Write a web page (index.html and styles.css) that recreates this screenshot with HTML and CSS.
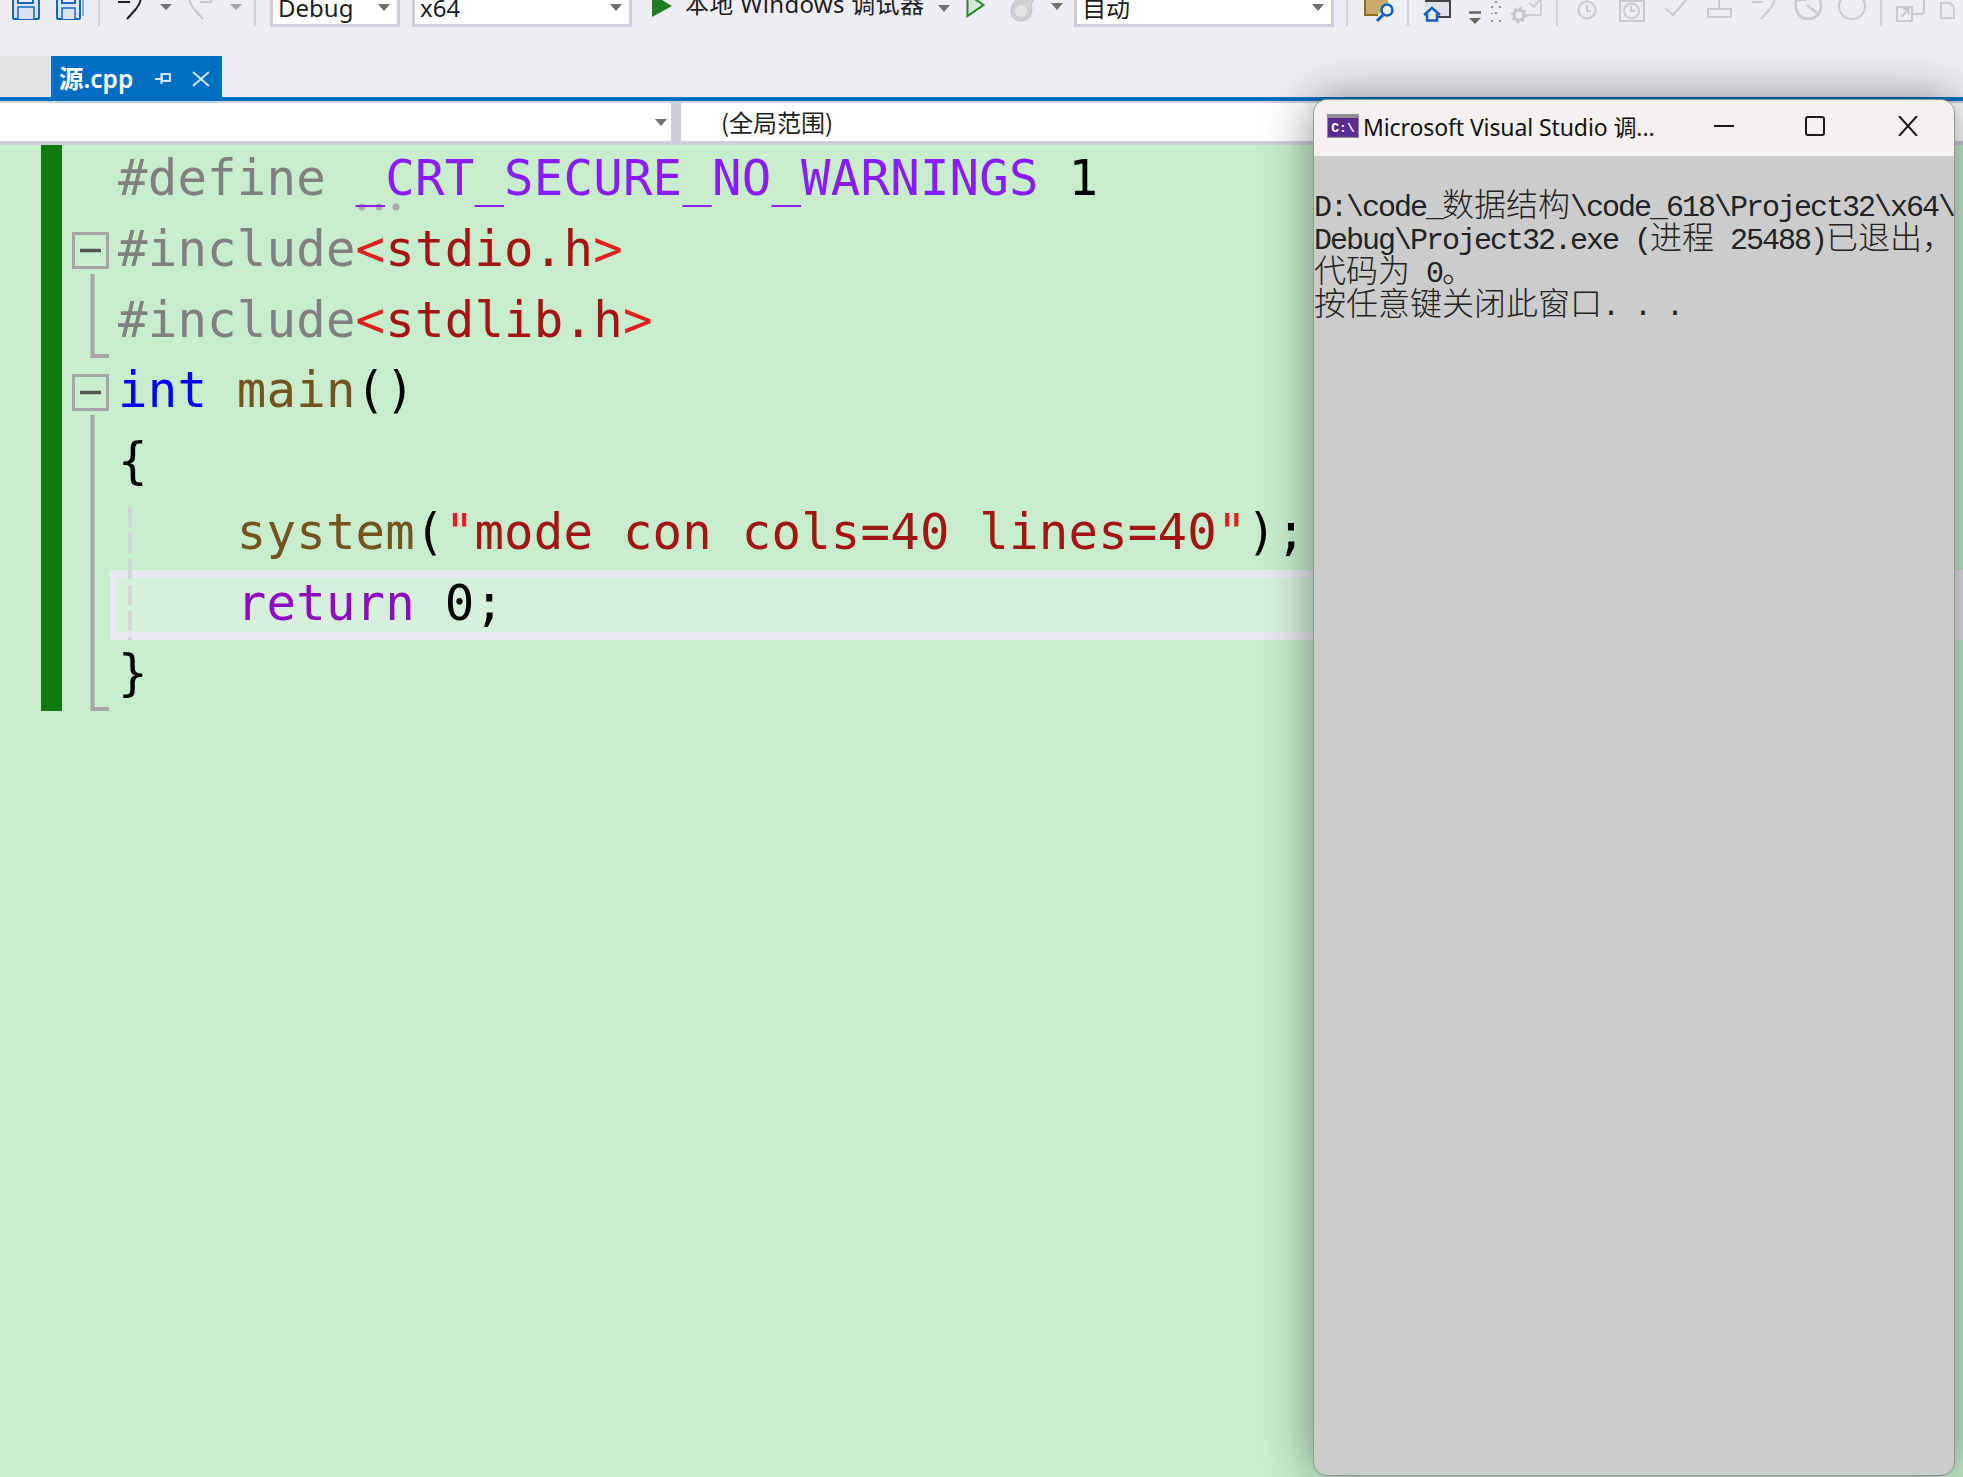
FILE: index.html
```html
<!DOCTYPE html>
<html lang="zh">
<head>
<meta charset="utf-8">
<title>源.cpp</title>
<link rel="stylesheet" href="styles.css">
</head>
<body>
<div class="ide">
  <div class="toolbar">
    <svg class="strip" width="270" height="35" viewBox="0 -8 270 35" fill="none">
      <rect x="13" y="-6" width="26" height="25" rx="1" fill="#dbe3f0" stroke="#1468c0" stroke-width="2"/>
      <path d="M18 -6v9h15v-9" fill="#eeeef2" stroke="#1468c0" stroke-width="2"/>
      <path d="M18 19V7h16v12" fill="#dbe3f0" stroke="#1468c0" stroke-width="1.500"/>
      <path d="M83 -8v24" stroke="#7fa9d8" stroke-width="2"/>
      <rect x="57" y="-6" width="23" height="25" rx="1" fill="#dbe3f0" stroke="#1468c0" stroke-width="2"/>
      <path d="M62 -6v9h13v-9" fill="#eeeef2" stroke="#1468c0" stroke-width="2"/>
      <path d="M62 19V8h13v11" fill="#dbe3f0" stroke="#1468c0" stroke-width="1.500"/>
      <rect x="98" y="-8" width="2" height="34" fill="#cfd0dc"/>
      <path d="M118 2h12M141 -3c0 5-2 8-5 12L127 19" stroke="#222" stroke-width="2"/>
      <path d="M160 4h12l-6 6z" fill="#717171"/>
      <path d="M189 -3c0 5 2 8 5 12l9 10M200 2h11v-6" stroke="#c8c8cc" stroke-width="2"/>
      <path d="M230 4h12l-6 6z" fill="#a4a4a8"/>
      <rect x="254" y="-8" width="2" height="34" fill="#cfd0dc"/>
    </svg>
    <div class="combo combo-config"><span>Debug</span><i class="caret"></i></div>
    <div class="combo combo-platform"><span>x64</span><i class="caret"></i></div>
    <svg class="play" width="20" height="26" viewBox="0 0 20 26"><path d="M0 0l20 12L0 23z" fill="#1f7d1f"/></svg>
    <span class="run-label">本地 Windows 调试器</span>
    <i class="caret caret-run"></i>
    <svg class="play-outline" width="20" height="30" viewBox="0 -8 20 30"><path d="M1.500 -6v22l16-11z" fill="#d7e6d9" stroke="#1f8a1f" stroke-width="2"/></svg>
    <svg class="flame" width="28" height="30" viewBox="0 -8 28 30"><path d="M11 21C4 21 1 16 1 11 1 5 5 1 8 -3c0 3 1 4 3 4 2-2 5-3 6-6 1 2 1 4 0 5 3 0 5-1 8-3-1 3-3 5-4 7 2 6 1 17-10 17z" fill="#d0d0d2" stroke="#c2c2c6"/><circle cx="11" cy="11" r="6" fill="#e4e4e6"/></svg>
    <i class="caret caret-flame"></i>
    <div class="combo combo-auto"><span>自动</span><i class="caret"></i></div>
    <svg class="strip strip-end" width="628" height="35" viewBox="1335 -8 628 35" fill="none">
      <rect x="1347" y="-8" width="2" height="34" fill="#cfd0dc"/>
      <path d="M1366 -8v22h14l9-9V-8z" fill="#c9ab6c"/>
      <path d="M1366 -8v23h13" stroke="#8e6d14" stroke-width="2"/>
      <circle cx="1388" cy="10" r="5.500" fill="#eeeef2" stroke="#0f62b8" stroke-width="2.500"/>
      <path d="M1384 15l-6 6" stroke="#0f62b8" stroke-width="3"/>
      <rect x="1408" y="-8" width="2" height="34" fill="#cfd0dc"/>
      <rect x="1426" y="1" width="25" height="16" fill="#e0e0e6"/>
      <path d="M1426 1h25v16h-13" stroke="#444" stroke-width="2"/>
      <path d="M1425 15l8-7 8 7M1428 14v6.500h10V14" stroke="#0f62b8" stroke-width="2.500" fill="#eeeef2"/>
      <path d="M1470 12.500h12" stroke="#666" stroke-width="2.500"/>
      <path d="M1470 18h12l-6 6z" fill="#666"/>
      <path d="M1497 1v2M1493 6v2M1501 6v2M1497 12v2M1493 20v2M1501 20v2M1493 13v1" stroke="#999" stroke-width="2.500"/>
      <path d="M1516 -8v4M1516 15h26V-8" stroke="#cfcfd3" stroke-width="2"/>
      <path d="M1530 3l5 4 7-9" stroke="#cfcfd3" stroke-width="2"/>
      <circle cx="1520" cy="15" r="7" fill="#eeeef2"/>
      <circle cx="1520" cy="15" r="5" stroke="#c4c4c8" stroke-width="3"/>
      <circle cx="1520" cy="15" r="7" stroke="#c4c4c8" stroke-width="2" stroke-dasharray="2.500 3"/>
      <rect x="1557" y="-8" width="2" height="34" fill="#cfd0dc"/>
      <circle cx="1588" cy="10" r="8.500" stroke="#cacace" stroke-width="2"/>
      <path d="M1588 5v6h4M1588 -1v3" stroke="#cacace" stroke-width="2"/>
      <rect x="1621" y="1" width="24" height="20" stroke="#cacace" stroke-width="2"/>
      <circle cx="1632.500" cy="11" r="7.500" stroke="#cacace" stroke-width="2"/>
      <path d="M1632 6v5h4" stroke="#cacace" stroke-width="2"/>
      <path d="M1666 8l8 7 14-16" stroke="#cacace" stroke-width="2"/>
      <path d="M1709 9h23v8h-23zM1720 9V0" stroke="#cacace" stroke-width="2"/>
      <path d="M1753 2h11M1776 -3c0 5-2 8-5 12l-9 10" stroke="#cacace" stroke-width="2"/>
      <path d="M1797 0c-2 10 3 19 12 19 8 0 13-6 13-13s-4-11-8-13M1808 5l10 8M1796 0h12" stroke="#cacace" stroke-width="2.500"/>
      <circle cx="1853" cy="6" r="13" stroke="#cacace" stroke-width="2"/>
      <rect x="1881" y="-8" width="2" height="34" fill="#cfd0dc"/>
      <rect x="1898" y="7" width="15" height="14" stroke="#cacace" stroke-width="2"/>
      <path d="M1902 17l7-7M1904 9h5.500v5.500M1914 14h9l2-2V-8" stroke="#cacace" stroke-width="2"/>
      <path d="M1942 3h9l4 4v11h-13z" stroke="#cacace" stroke-width="2"/>
    </svg>
  </div>

  <div class="tabwell">
    <div class="tabwell-rest"></div>
    <div class="tab">
      <span class="tab-name">源.cpp</span>
      <svg class="tab-pin" width="17" height="14" viewBox="0 0 17 14" fill="none"><path d="M0 7h6M6.500 1v11" stroke="#d5e5f5" stroke-width="2"/><rect x="7" y="2" width="8" height="7" stroke="#d5e5f5" stroke-width="2"/></svg>
      <svg class="tab-close" width="18" height="16" viewBox="0 0 18 16" fill="none"><path d="M1 1l16 14M17 1L1 15" stroke="#d5e5f5" stroke-width="2"/></svg>
    </div>
  </div>
  <div class="tabline"></div>

  <div class="navbar">
    <div class="nav-left"><i class="caret"></i></div>
    <div class="nav-right">(全局范围)</div>
  </div>

  <div class="editor">
    <div class="changebar"></div>
    <svg class="outline" width="46" height="566" viewBox="0 0 46 566" fill="none">
      <rect x="1.500" y="88.500" width="34" height="34" fill="#c7edcc" stroke="#a5a5a5" stroke-width="3"/>
      <path d="M8 105.500h21" stroke="#555" stroke-width="3.500"/>
      <path d="M20.500 129v82H37" stroke="#a5a5a5" stroke-width="4"/>
      <rect x="1.500" y="230.500" width="34" height="34" fill="#c7edcc" stroke="#a5a5a5" stroke-width="3"/>
      <path d="M8 247.500h21" stroke="#555" stroke-width="3.500"/>
      <path d="M20.500 270v294H37" stroke="#a5a5a5" stroke-width="4"/>
    </svg>
    <div class="code">
      <div class="guide"></div>
      <svg class="squiggle" width="44" height="8" viewBox="0 0 44 8"><circle cx="4" cy="4" r="3.500" fill="#a8a8a8"/><circle cx="21" cy="4" r="3.500" fill="#a8a8a8"/><circle cx="38" cy="4" r="3.500" fill="#a8a8a8"/></svg>
      <div class="line"><span class="pp">#define </span><span class="macro">_CRT_SECURE_NO_WARNINGS</span> 1</div>
      <div class="line"><span class="pp">#include</span><span class="br">&lt;</span><span class="str">stdio.h</span><span class="br">&gt;</span></div>
      <div class="line"><span class="pp">#include</span><span class="br">&lt;</span><span class="str">stdlib.h</span><span class="br">&gt;</span></div>
      <div class="line"><span class="kw">int</span> <span class="fn">main</span>()</div>
      <div class="line">{</div>
      <div class="line">    <span class="fn">system</span>(<span class="br">"</span><span class="str">mode con cols=40 lines=40</span><span class="br">"</span>);</div>
      <div class="line current">    <span class="ctl">return</span> 0;</div>
      <div class="line">}</div>
    </div>
  </div>
</div>

<div class="console">
  <div class="console-title">
    <svg class="console-icon" width="32" height="24" viewBox="0 0 32 24"><rect width="32" height="24" fill="#8d8d98"/><rect x="1" y="4" width="30" height="19" fill="#5c2d91"/><text x="16" y="18" font-family="Liberation Mono" font-size="13" font-weight="700" fill="#fff" text-anchor="middle">C:\</text></svg>
    <span class="console-name">Microsoft Visual Studio 调...</span>
    <svg class="win-btn btn-min" width="20" height="20" viewBox="0 0 20 20"><path d="M0 10h20" stroke="#1a1a1a" stroke-width="2"/></svg>
    <svg class="win-btn btn-max" width="20" height="20" viewBox="0 0 20 20" fill="none"><rect x="1" y="1" width="18" height="18" rx="2" stroke="#1a1a1a" stroke-width="2"/></svg>
    <svg class="win-btn btn-close" width="20" height="20" viewBox="0 0 20 20"><path d="M1 0l18 20M19 0L1 20" stroke="#1a1a1a" stroke-width="2"/></svg>
  </div>
  <div class="console-body">
    <div class="console-line">D:\code_<span class="cjk">数据结构</span>\code_618\Project32\x64\</div>
    <div class="console-line">Debug\Project32.exe (<span class="cjk">进程</span> 25488)<span class="cjk">已退出，</span></div>
    <div class="console-line"><span class="cjk">代码为</span> 0<span class="cjk">。</span></div>
    <div class="console-line"><span class="cjk">按任意键关闭此窗口</span>. . .</div>
  </div>
</div>
</body>
</html>
```
FILE: styles.css
```css
* { box-sizing: border-box; }
html, body { margin: 0; padding: 0; }
body {
  width: 1963px;
  height: 1477px;
  overflow: hidden;
  position: relative;
  background: #c7edcc;
  font-family: "Noto Sans", "Noto Sans CJK SC", sans-serif;
  color: #1e1e1e;
}
.ide { display: flex; flex-direction: column; height: 1477px; }

.toolbar {
  height: 56px;
  background: #eeeef2;
  overflow: hidden;
  display: flex;
  align-items: flex-start;
  flex: none;
}
.strip { flex: none; margin-top: -8px; }
.combo {
  flex: none;
  height: 35px;
  margin-top: -8px;
  background: #fff;
  border: 3px solid #cccedb;
  display: flex;
  align-items: flex-start;
  justify-content: space-between;
  font-size: 24px;
  line-height: 30px;
  padding: 0 7px 0 5px;
}
.combo span { margin-top: -2px; }
.combo .caret { margin-top: 9px; }
.combo-config { width: 130px; }
.combo-platform { width: 220px; margin-left: 12px; }
.combo-auto { width: 260px; margin-left: 11px; }
.caret {
  display: block;
  flex: none;
  width: 0;
  height: 0;
  border-left: 6.5px solid transparent;
  border-right: 6.5px solid transparent;
  border-top: 7px solid #717171;
}
.play { flex: none; margin: -6px 0 0 20px; }
.run-label { flex: none; margin: -13px 0 0 13px; font-size: 24px; letter-spacing: 0.3px; line-height: 33px; white-space: pre; width: 240px; }
.caret-run { margin: 5px 0 0 13px; }
.play-outline { flex: none; margin: -8px 0 0 16px; }
.flame { flex: none; margin: -8px 0 0 24px; }
.caret-flame { margin: 3px 0 0 13px; }

.tabwell { display: flex; height: 41px; flex: none; background: #eeeef2; }
.tabwell-rest { width: 51px; background: #e3e3e3; }
.tab {
  width: 171px;
  background: #016fc1;
  color: #fff;
  display: flex;
  align-items: center;
  padding: 4px 12px 0 8px;
  gap: 19px;
}
.tab-name { font-size: 24.5px; font-weight: 600; line-height: 32px; margin-right: 3px; }
.tab-close { margin-left: 1px; }
.tabline { height: 4px; background: #016fc1; flex: none; }

.navbar {
  height: 44px;
  flex: none;
  display: flex;
  background: #cccedb;
  padding: 2px 0 4px;
  gap: 10px;
}
.nav-left {
  width: 671px;
  background: #fff;
  display: flex;
  justify-content: flex-end;
  align-items: center;
  padding-right: 4px;
}
.nav-right {
  flex: 1;
  background: #fff;
  padding-left: 40px;
  font-size: 24px;
  line-height: 38px;
  font-family: "Noto Sans CJK SC", sans-serif;
}

.editor { flex: 1; display: flex; align-items: flex-start; background: #c7edcc; }
.changebar { width: 21px; height: 566px; margin-left: 41px; background: #0f7a0f; flex: none; }
.outline { flex: none; margin-left: 10px; }
.code {
  position: relative;
  flex: 1;
  margin-top: -1px;
  font-family: "DejaVu Sans Mono", monospace;
  font-size: 49px;
  letter-spacing: 0.2px;
  color: #000;
  z-index: 0;
}
.line { height: 70.75px; line-height: 70.75px; white-space: pre; position: relative; }
.current::before {
  content: "";
  position: absolute;
  left: -8px;
  right: 0;
  top: 1px;
  bottom: -1px;
  background: #d6f1db;
  border: 8px solid #e8e8f0;
  border-left-width: 7px;
  z-index: -1;
}
.guide {
  position: absolute;
  left: 10px;
  top: 363px;
  width: 4px;
  height: 133px;
  background: repeating-linear-gradient(#d2d6d4 0 20px, transparent 20px 26px);
  z-index: 1;
}
.squiggle { position: absolute; left: 240px; top: 59px; }
.pp { color: #808080; }
.macro { color: #8a1bff; }
.str { color: #a31515; }
.br { color: #e21f1f; }
.kw { color: #0000ff; }
.fn { color: #74531f; }
.ctl { color: #8f08c4; }

.console {
  position: absolute;
  left: 1313px;
  top: 99px;
  width: 642px;
  height: 1377px;
  border-radius: 14px;
  overflow: hidden;
  background: #cccccc;
  border: 1px solid #8c9a8e;
  box-shadow: 0 0 50px rgba(0, 0, 0, 0.45);
  display: flex;
  flex-direction: column;
}
.console-title {
  height: 56px;
  flex: none;
  background: #f5f1f0;
  display: flex;
  align-items: center;
  padding: 0 0 4px 13px;
}
.console-icon { flex: none; }
.console-name { font-size: 23px; letter-spacing: -0.1px; margin-left: 4px; width: 301px; white-space: nowrap; color: #111; }
.win-btn { flex: none; }
.btn-min { margin-left: 50px; }
.btn-max { margin-left: 71px; }
.btn-close { margin-left: 73px; }
.console-body {
  padding-top: 30px;
  font-family: "Liberation Mono", monospace;
  font-size: 30px;
  font-weight: 400;
  letter-spacing: -2px;
  color: #222;
}
.console-line { height: 33px; line-height: 33px; white-space: pre; }
.cjk { font-family: "Noto Sans CJK SC", sans-serif; font-size: 32px; letter-spacing: 0; line-height: 33px; font-weight: 300; }
```
